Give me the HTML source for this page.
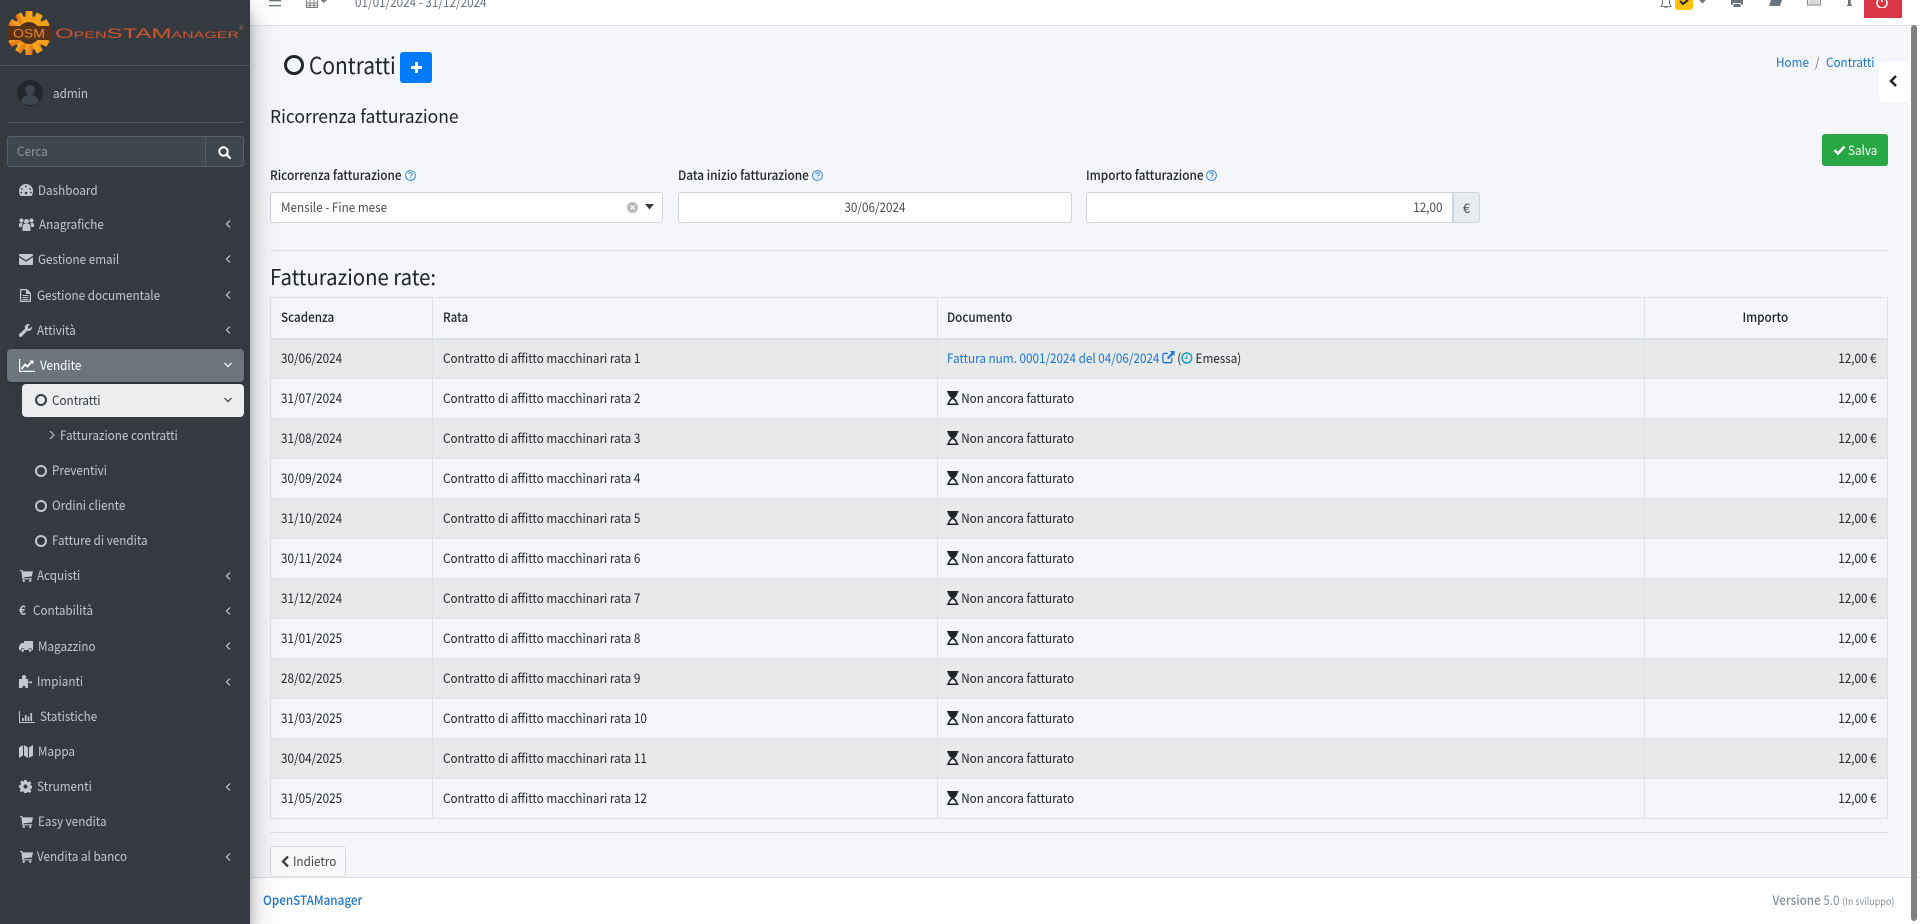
<!DOCTYPE html>
<html lang="it"><head><meta charset="utf-8"><title>Contratti</title>
<style>
*{box-sizing:border-box}
html,body{margin:0;padding:0;width:1920px;height:924px;overflow:hidden;background:#fff}
body{font-family:"Noto Sans CJK JP","Liberation Sans",sans-serif;font-size:13px;color:#212529;position:relative}
.a{position:absolute;white-space:nowrap}
.l{position:absolute;white-space:nowrap;line-height:20px;height:20px;transform:scaleX(.9);transform-origin:left center}
.t{display:inline-block;transform:scaleX(.9);transform-origin:left center;white-space:nowrap;position:relative;top:-1px}
.tc{transform-origin:center center}
.tr{transform-origin:right center}
#side{position:absolute;left:0;top:0;width:250px;height:924px;background:#343a40;box-shadow:0 14px 28px rgba(0,0,0,.25),0 10px 10px rgba(0,0,0,.22);z-index:5;color:#c2c7d0}
.ic{position:absolute;fill:currentColor}
.ch{position:absolute;left:224px;width:8px;height:10px;fill:none;stroke:currentColor;stroke-width:1.200}
.ring{position:absolute;left:35px;width:12px;height:12px;border:2px solid #c2c7d0;border-radius:50%}
#hdr{position:absolute;left:250px;top:0;width:1670px;height:26px;background:#fff;border-bottom:1px solid #dee2e6}
#main{position:absolute;left:250px;top:26px;width:1658px;height:851px;background:#f4f6f9}
#foot{position:absolute;left:250px;top:877px;width:1670px;height:47px;background:#fff;border-top:1px solid #dee2e6}
.inp{position:absolute;top:192px;height:31px;background:#fff;border:1px solid #ced4da;border-radius:3px;line-height:29px;color:#495057}
.lab{font-weight:500;color:#212529}
table{position:absolute;left:270px;top:297px;width:1617px;border-collapse:collapse;table-layout:fixed}
td,th{border:1px solid #dee2e6;padding:0 10px 0 9.500px;height:40px;line-height:20px;font-weight:400;text-align:left;white-space:nowrap;overflow:hidden}
th{font-weight:500;height:41px;border-bottom:2px solid #dee2e6}
tr.o td{background:#e8e9eb}
tr.e td{background:#f4f6f9}
.r{text-align:right}
a{color:#1976d2;text-decoration:none}
svg.h{width:12.800px;height:14px;vertical-align:-2px;margin-right:3px}
</style></head><body>
<svg width="0" height="0" style="position:absolute"><defs>
<symbol id="hg" viewBox="0 0 12 14" preserveAspectRatio="none"><path d="M0 0h12v1.500h-1.100c0 2.500-1.700 4.300-3.300 5.500 1.600 1.200 3.300 3 3.300 5.500H12V14H0v-1.500h1.100C1.100 10 2.800 8.200 4.400 7 2.800 5.800 1.100 4 1.100 1.500H0z" fill="#212529"/><path d="M2.600 12.500c.3-1.900 1.800-3.500 3.400-4.400 1.600.9 3.100 2.500 3.400 4.400z" fill="#f4f6f9"/></symbol>
<symbol id="cart" viewBox="0 0 14 13"><path d="M0 0h2.500l.5 1.500h11l-1.200 5.500-9 1 .3 1h8.900v1.200H2.500L1.500 1.200H0z"/><circle cx="4" cy="11.700" r="1.300"/><circle cx="11" cy="11.700" r="1.300"/></symbol>
</defs></svg>

<div id="main"></div>
<div id="hdr"></div>
<div id="foot"></div>

<div id="side">
<svg class="a" style="left:7px;top:10px" width="240" height="47" viewBox="0 0 240 47">
<defs><linearGradient id="g" x1="0" y1="0" x2="1" y2="1"><stop offset="0" stop-color="#f39a12"/><stop offset=".5" stop-color="#f4a71d"/><stop offset="1" stop-color="#e8661c"/></linearGradient></defs>
<g fill="url(#g)"><circle cx="22" cy="23" r="17"/>
<g id="t"><rect x="18.500" y="1" width="7" height="44" rx="1"/><rect x="18.500" y="1" width="7" height="44" rx="1" transform="rotate(30 22 23)"/><rect x="18.500" y="1" width="7" height="44" rx="1" transform="rotate(60 22 23)"/><rect x="18.500" y="1" width="7" height="44" rx="1" transform="rotate(90 22 23)"/><rect x="18.500" y="1" width="7" height="44" rx="1" transform="rotate(120 22 23)"/><rect x="18.500" y="1" width="7" height="44" rx="1" transform="rotate(150 22 23)"/></g></g>
<circle cx="22" cy="23" r="11" fill="#4a3222"/>
<rect x="0" y="16" width="44" height="14" fill="#5a3218"/>
<text x="22" y="27.500" text-anchor="middle" font-family="Liberation Sans,sans-serif" font-size="11.500" fill="#e88a25" textLength="32" lengthAdjust="spacingAndGlyphs">OSM</text>
<text x="48" y="28" font-family="Liberation Sans,sans-serif" font-size="13.500" fill="#d2552a" style="font-variant:small-caps" textLength="184" lengthAdjust="spacingAndGlyphs">OpenSTAManager</text>
<text x="232" y="20" font-family="Liberation Sans,sans-serif" font-size="6" fill="#a0705a">®</text>
</svg>
<div class="a" style="left:0;top:65px;width:250px;height:1px;background:#4b545c"></div>
<svg class="a" style="left:17px;top:80px" width="26" height="26" viewBox="0 0 26 26"><circle cx="13" cy="13" r="13" fill="#23272b"/><circle cx="13" cy="10" r="5" fill="#3f464d"/><path d="M4 22c1-6 5-7 9-7s8 1 9 7c-2.500 2-5.500 3-9 3s-6.500-1-9-3z" fill="#3f464d"/></svg>
<div class="l" style="left:53px;top:83px">admin</div>
<div class="a" style="left:7px;top:122px;width:237px;height:1px;background:#4f5962"></div>
<div class="a" style="left:7px;top:136px;width:237px;height:31px;background:#3f474e;border:1px solid #56606a;border-radius:3px"></div>
<div class="a" style="left:205px;top:136px;width:1px;height:31px;background:#56606a"></div>
<div class="l" style="left:17px;top:141px;color:#8d959d">Cerca</div>
<svg class="a" style="left:218px;top:146px;color:#fff" width="13" height="13" viewBox="0 0 13 13"><circle cx="5.500" cy="5.500" r="4.200" fill="none" stroke="#fff" stroke-width="2"/><path d="M8.500 8.500l3.500 3.500" stroke="#fff" stroke-width="2.400" stroke-linecap="round"/></svg>

<svg class="ic" style="left:19px;top:184px" width="14" height="12" viewBox="0 0 14 12"><path d="M7 0a7 7 0 0 0-7 7c0 2 .6 3.500 1.500 5h11c.9-1.500 1.500-3 1.500-5a7 7 0 0 0-7-7z"/><g fill="#343a40"><circle cx="7" cy="2.500" r=".9"/><circle cx="3" cy="5" r=".9"/><circle cx="11" cy="5" r=".9"/><circle cx="2.200" cy="8.500" r=".9"/><circle cx="11.800" cy="8.500" r=".9"/><circle cx="7" cy="9" r="1.300"/></g></svg>
<div class="l" style="left:38px;top:180px">Dashboard</div>

<svg class="ic" style="left:19px;top:218px" width="15" height="13" viewBox="0 0 15 13"><circle cx="7.500" cy="3.500" r="2.500"/><circle cx="2.500" cy="2.500" r="2"/><circle cx="12.500" cy="2.500" r="2"/><path d="M3.500 13V8.500c0-1.500 1-2.500 2-2.500h4c1 0 2 1 2 2.500V13z"/><path d="M0 9V6.500C0 5.500.8 5 1.500 5h2L2.600 9zM15 9V6.500c0-1-.8-1.500-1.500-1.500h-2l.9 4z"/></svg>
<div class="l" style="left:39px;top:214px">Anagrafiche</div>
<svg class="ch" style="top:219px" viewBox="0 0 8 10"><path d="M6 1.500L2.500 5 6 8.500"/></svg>

<svg class="ic" style="left:19px;top:254px" width="14" height="11" viewBox="0 0 14 11"><path d="M1 0h12a1 1 0 0 1 1 1v.8L7 6.300 0 1.800V1a1 1 0 0 1 1-1zM0 3.300l7 4.500 7-4.500V10a1 1 0 0 1-1 1H1a1 1 0 0 1-1-1z"/></svg>
<div class="l" style="left:38px;top:249px">Gestione email</div>
<svg class="ch" style="top:254px" viewBox="0 0 8 10"><path d="M6 1.500L2.500 5 6 8.500"/></svg>

<svg class="ic" style="left:20px;top:289px" width="11" height="13" viewBox="0 0 11 13"><path d="M0 0h7l4 4v9H0zM1.200 1.200v10.600h8.600V5H6V1.200zM2.500 6h6v1h-6zm0 2h6v1h-6zm0 2h6v1h-6z" fill-rule="evenodd"/></svg>
<div class="l" style="left:37px;top:285px">Gestione documentale</div>
<svg class="ch" style="top:290px" viewBox="0 0 8 10"><path d="M6 1.500L2.500 5 6 8.500"/></svg>

<svg class="ic" style="left:19px;top:324px" width="13" height="13" viewBox="0 0 13 13"><path d="M13 3.200c0 2-1.500 3.800-3.500 3.800-.5 0-.9-.1-1.300-.2L3 12.300c-.8.900-2 .9-2.700.2-.7-.8-.6-1.900.2-2.700L6 4.700c-.1-.5-.2-.9-.2-1.300C5.800 1.500 7.500 0 9.600 0c.5 0 1 .1 1.400.3L8.800 2.600l.4 1.800 1.700.4L12.800 2.500c.1.200.2.400.2.700z"/></svg>
<div class="l" style="left:37px;top:320px">Attività</div>
<svg class="ch" style="top:325px" viewBox="0 0 8 10"><path d="M6 1.500L2.500 5 6 8.500"/></svg>

<div class="a" style="left:7px;top:349px;width:237px;height:33px;background:#6c757d;border-radius:4px;box-shadow:0 1px 3px rgba(0,0,0,.3)"></div>
<svg class="ic" style="left:19px;top:359px;color:#fff" width="16" height="13" viewBox="0 0 16 13"><path d="M0 0h1.200v11.800H16V13H0z"/><path d="M2.500 10l3.500-4.500 2.500 2L13 2.500" fill="none" stroke="#fff" stroke-width="1.800"/><path d="M10.500 1.500h4v4z"/></svg>
<div class="l" style="left:40px;top:355px;color:#fff">Vendite</div>
<svg class="a" style="left:223px;top:361px" width="10" height="8" viewBox="0 0 10 8"><path d="M1.500 2L5 5.500 8.500 2" fill="none" stroke="#fff" stroke-width="1.200"/></svg>

<div class="a" style="left:22px;top:384px;width:222px;height:33px;background:#ecedee;border-radius:4px"></div>
<div class="ring" style="top:394px;border-color:#343a40"></div>
<div class="l" style="left:52px;top:390px;color:#343a40">Contratti</div>
<svg class="a" style="left:223px;top:396px" width="10" height="8" viewBox="0 0 10 8"><path d="M1.500 2L5 5.500 8.500 2" fill="none" stroke="#343a40" stroke-width="1.200"/></svg>

<svg class="a" style="left:49px;top:430px" width="6" height="10" viewBox="0 0 6 10"><path d="M1 1l4 4-4 4" fill="none" stroke="#c2c7d0" stroke-width="1.100"/></svg>
<div class="l" style="left:60px;top:425px">Fatturazione contratti</div>
<div class="ring" style="top:465px"></div><div class="l" style="left:52px;top:460px">Preventivi</div>
<div class="ring" style="top:500px"></div><div class="l" style="left:52px;top:495px">Ordini cliente</div>
<div class="ring" style="top:535px"></div><div class="l" style="left:52px;top:530px">Fatture di vendita</div>

<svg class="ic" style="left:20px;top:570px" width="13" height="12" viewBox="0 0 14 13"><use href="#cart"/></svg>
<div class="l" style="left:37px;top:565px">Acquisti</div>
<svg class="ch" style="top:571px" viewBox="0 0 8 10"><path d="M6 1.500L2.500 5 6 8.500"/></svg>

<div class="l" style="left:19px;top:600px;font-weight:700">€</div>
<div class="l" style="left:33px;top:600px">Contabilità</div>
<svg class="ch" style="top:606px" viewBox="0 0 8 10"><path d="M6 1.500L2.500 5 6 8.500"/></svg>

<svg class="ic" style="left:19px;top:641px" width="14" height="11" viewBox="0 0 14 11"><path d="M5 0h9v9h-1a1.800 1.800 0 0 0-3.600 0H5.500a1.800 1.800 0 0 0-3.600 0H0V5l2.500-3H5z"/><circle cx="3.700" cy="9.400" r="1.400"/><circle cx="11.200" cy="9.400" r="1.400"/></svg>
<div class="l" style="left:38px;top:636px">Magazzino</div>
<svg class="ch" style="top:641px" viewBox="0 0 8 10"><path d="M6 1.500L2.500 5 6 8.500"/></svg>

<svg class="ic" style="left:19px;top:675px" width="13" height="13" viewBox="0 0 13 13"><path d="M0 4h3.500c-.5-.8-.7-1.200-.7-1.800C2.800 1 3.500 0 5 0s2.200 1 2.200 2.200c0 .6-.2 1-.7 1.800H9v2.700h2c.5-.3.700-.6 1.200-.6.500 0 .8.500.8 1.200s-.3 1.200-.8 1.200c-.5 0-.7-.3-1.200-.6H9V13H6.500c.2-1 0-2-1.500-2s-1.700 1-1.500 2H0z"/></svg>
<div class="l" style="left:37px;top:671px">Impianti</div>
<svg class="ch" style="top:677px" viewBox="0 0 8 10"><path d="M6 1.500L2.500 5 6 8.500"/></svg>

<svg class="ic" style="left:19px;top:711px" width="16" height="12" viewBox="0 0 16 12"><path d="M0 0h1v11h15v1H0zM3 7h1.700v3H3zM5.800 4h1.700v6H5.800zM8.600 5.500h1.700V10H8.600zM11.400 2h1.700v8h-1.700z"/></svg>
<div class="l" style="left:40px;top:706px">Statistiche</div>

<svg class="ic" style="left:19px;top:745px" width="14" height="13" viewBox="0 0 14 13"><path d="M0 2.500L4 0v10.500L0 13zM5 0l4 2.500V13l-4-2.500zM10 2.500L14 0v10.500L10 13z"/></svg>
<div class="l" style="left:38px;top:741px">Mappa</div>

<svg class="ic" style="left:19px;top:780px" width="13" height="13" viewBox="0 0 13 13"><path fill-rule="evenodd" d="M5.300 0h2.400l.3 1.800 1.100.5L10.700 1.200l1.700 1.700-1.100 1.600.5 1.100 1.700.3v2.400l-1.700.3-.5 1.100 1.100 1.600-1.700 1.700-1.600-1.100-1.100.5-.3 1.600H5.300L5 11.700l-1.100-.5-1.600 1.100L.6 10.600l1.100-1.600-.5-1.100L0 7.600V5.200l1.700-.3.500-1.100L1.100 2.200 2.800.5l1.600 1.100L5 1.200zM6.500 4.500a2 2 0 1 0 0 4 2 2 0 0 0 0-4z"/></svg>
<div class="l" style="left:37px;top:776px">Strumenti</div>
<svg class="ch" style="top:782px" viewBox="0 0 8 10"><path d="M6 1.500L2.500 5 6 8.500"/></svg>

<svg class="ic" style="left:20px;top:816px" width="13" height="12" viewBox="0 0 14 13"><use href="#cart"/></svg>
<div class="l" style="left:38px;top:811px">Easy vendita</div>

<svg class="ic" style="left:20px;top:851px" width="13" height="12" viewBox="0 0 14 13"><use href="#cart"/></svg>
<div class="l" style="left:37px;top:846px">Vendita al banco</div>
<svg class="ch" style="top:852px" viewBox="0 0 8 10"><path d="M6 1.500L2.500 5 6 8.500"/></svg>
</div>

<!-- header (scrolled) -->
<svg class="a" style="left:269px;top:0" width="12" height="8" viewBox="0 0 12 8"><path d="M0 0h12v1.400H0zM0 5h12v1.400H0z" fill="#6c757d"/></svg>
<svg class="a" style="left:306px;top:0" width="24" height="8" viewBox="0 0 24 8"><path d="M.5 0v7.500h11V0M.5 3h11M4 0v7.500M8 0v7.500M.5 5.300h11" fill="none" stroke="#777" stroke-width=".9"/><path d="M14.500 0h6.500l-3.250 3z" fill="#777"/></svg>
<div class="l" style="left:355px;top:-8px;color:#6c757d">01/01/2024 - 31/12/2024</div>
<svg class="a" style="left:1660px;top:0" width="12" height="8" viewBox="0 0 12 8"><path d="M2.500 0v3L1 6.500h10L9.500 3V0M5 7c0 .6.500 1 1 1s1-.4 1-1" fill="none" stroke="#777" stroke-width="1"/></svg>
<div class="a" style="left:1675px;top:0;width:18px;height:10px;background:#ffc107;border-radius:0 0 3px 3px"></div>
<svg class="a" style="left:1678px;top:0" width="12" height="6" viewBox="0 0 12 6"><path d="M2 1l3 3 5-4" fill="none" stroke="#212529" stroke-width="2"/></svg>
<svg class="a" style="left:1699px;top:0" width="7" height="4" viewBox="0 0 7 4"><path d="M0 0h7L3.500 3.500z" fill="#777"/></svg>
<svg class="a" style="left:1731px;top:0" width="12" height="7" viewBox="0 0 12 7"><path d="M0 0h12v4.500h-2V3H2v1.500H0zM2.500 4h7v3h-7z" fill="#6c757d"/></svg>
<svg class="a" style="left:1769px;top:0" width="13" height="7" viewBox="0 0 13 7"><path d="M2 0h11l-2 6H0z" fill="#6c757d"/></svg>
<svg class="a" style="left:1807px;top:0" width="14" height="6" viewBox="0 0 14 6"><rect x=".5" y="-2" width="13" height="7" fill="#eee" stroke="#8a8a8a"/><path d="M2.500 1h9M2.500 3h9" stroke="#999" stroke-dasharray="1 1"/></svg>
<svg class="a" style="left:1847px;top:0" width="5" height="6" viewBox="0 0 5 6"><path d="M1 0h2.800v4.800H5V6H0V4.800h1z" fill="#6c757d"/></svg>
<div class="a" style="left:1864px;top:0;width:38px;height:18px;background:#dc3545"></div>
<svg class="a" style="left:1876px;top:0" width="12" height="8" viewBox="0 0 12 8"><path d="M2 0a5 5 0 1 0 8 0" fill="none" stroke="#fff" stroke-width="1.600"/><path d="M6 0v2" stroke="#fff" stroke-width="1.600"/></svg>
<div class="a" style="left:1911px;top:25px;width:6px;height:896px;background:#808080;border-radius:3px"></div>

<!-- page title -->
<div class="a" style="left:284px;top:55px;width:20px;height:20px;border:3px solid #212529;border-radius:50%"></div>
<div class="a" style="left:309px;top:46px;font-size:23px;line-height:36px;transform:scaleX(.91);transform-origin:left center">Contratti</div>
<div class="a" style="left:400px;top:52px;width:32px;height:31px;background:#007bff;border-radius:3px"></div>
<svg class="a" style="left:411px;top:62px" width="11" height="11" viewBox="0 0 11 11"><path d="M4 0h3v4h4v3H7v4H4V7H0V4h4z" fill="#fff"/></svg>
<div class="l" style="left:1776px;top:52px"><a href="#">Home</a></div>
<div class="l" style="left:1815px;top:52px;color:#6c757d">/</div>
<div class="l" style="left:1826px;top:52px"><a href="#">Contratti</a></div>
<div class="a" style="left:1879px;top:62px;width:29px;height:40px;background:#fff;border-radius:4px 0 0 4px"></div>
<svg class="a" style="left:1889px;top:75px" width="9" height="12" viewBox="0 0 9 12"><path d="M7 1L2 6l5 5" fill="none" stroke="#212529" stroke-width="2.600"/></svg>

<div class="a" style="left:270px;top:102px;font-size:18px;line-height:28px;transform:scaleX(.97);transform-origin:left center">Ricorrenza fatturazione</div>
<div class="a" style="left:1822px;top:134px;width:66px;height:32px;background:#28a745;border-radius:3px"></div>
<svg class="a" style="left:1833px;top:145px" width="13" height="10" viewBox="0 0 13 10"><path d="M1.500 5l3.500 3.500L11.500 1.500" fill="none" stroke="#fff" stroke-width="2.600"/></svg>
<div class="l" style="left:1848px;top:140px;color:#fff">Salva</div>

<div class="l lab" style="left:270px;top:165px;transform:scaleX(.91)">Ricorrenza fatturazione</div>
<svg class="a" style="left:405px;top:170px" width="11" height="11" viewBox="0 0 11 11"><circle cx="5.500" cy="5.500" r="4.900" fill="none" stroke="#3c8dd0" stroke-width="1"/><path d="M3.800 4.300c0-1 .8-1.500 1.700-1.500s1.700.5 1.700 1.400c0 1.200-1.600 1.200-1.600 2.400" fill="none" stroke="#3c8dd0"/><circle cx="5.600" cy="8" r=".6" fill="#3c8dd0"/></svg>
<div class="l lab" style="left:678px;top:165px;transform:scaleX(.91)">Data inizio fatturazione</div>
<svg class="a" style="left:812px;top:170px" width="11" height="11" viewBox="0 0 11 11"><circle cx="5.500" cy="5.500" r="4.900" fill="none" stroke="#3c8dd0" stroke-width="1"/><path d="M3.800 4.300c0-1 .8-1.500 1.700-1.500s1.700.5 1.700 1.400c0 1.200-1.600 1.200-1.600 2.400" fill="none" stroke="#3c8dd0"/><circle cx="5.600" cy="8" r=".6" fill="#3c8dd0"/></svg>
<div class="l lab" style="left:1086px;top:165px;transform:scaleX(.91)">Importo fatturazione</div>
<svg class="a" style="left:1206px;top:170px" width="11" height="11" viewBox="0 0 11 11"><circle cx="5.500" cy="5.500" r="4.900" fill="none" stroke="#3c8dd0" stroke-width="1"/><path d="M3.800 4.300c0-1 .8-1.500 1.700-1.500s1.700.5 1.700 1.400c0 1.200-1.600 1.200-1.600 2.400" fill="none" stroke="#3c8dd0"/><circle cx="5.600" cy="8" r=".6" fill="#3c8dd0"/></svg>

<div class="inp" style="left:270px;width:393px;padding-left:10px"><span class="t">Mensile - Fine mese</span></div>
<svg class="a" style="left:627px;top:202px" width="11" height="11" viewBox="0 0 11 11"><circle cx="5.500" cy="5.500" r="5.500" fill="#bbb"/><path d="M3.500 3.500l4 4m0-4l-4 4" stroke="#fff" stroke-width="1.200"/></svg>
<svg class="a" style="left:645px;top:204px" width="9" height="6" viewBox="0 0 9 6"><path d="M0 0h9L4.500 5.500z" fill="#343a40"/></svg>
<div class="inp" style="left:678px;width:394px;text-align:center"><span class="t tc">30/06/2024</span></div>
<div class="inp" style="left:1086px;width:367px;text-align:right;padding-right:10px;border-radius:3px 0 0 3px"><span class="t tr">12,00</span></div>
<div class="inp" style="left:1453px;width:27px;background:#e9ecef;text-align:center;border-radius:0 3px 3px 0">€</div>

<div class="a" style="left:270px;top:250px;width:1618px;height:1px;background:#dee2e6"></div>
<div class="a" style="left:270px;top:260px;font-size:21.500px;line-height:34px;transform:scaleX(.945);transform-origin:left center">Fatturazione rate:</div>

<table>
<colgroup><col style="width:162px"><col style="width:504.500px"><col style="width:707.500px"><col style="width:243px"></colgroup>
<tr class="e"><th><span class="t">Scadenza</span></th><th><span class="t">Rata</span></th><th><span class="t">Documento</span></th><th style="text-align:center"><span class="t tc">Importo</span></th></tr>
<tr class="o"><td><span class="t">30/06/2024</span></td><td><span class="t">Contratto di affitto macchinari rata 1</span></td><td><span class="t"><a href="#">Fattura num. 0001/2024 del 04/06/2024</a> <svg width="14" height="12.500" viewBox="0 0 13 12" preserveAspectRatio="none" style="vertical-align:-1px"><path d="M10 6.500V10a1.200 1.200 0 0 1-1.200 1.200H2A1.200 1.200 0 0 1 .8 10V3.500A1.200 1.200 0 0 1 2 2.300h4" fill="none" stroke="#1976d2" stroke-width="1.300"/><path d="M8 0h5v5l-1.700-1.700L6.500 8 5 6.500l4.700-4.800z" fill="#1976d2"/></svg> (<svg width="13" height="12" viewBox="0 0 12 12" preserveAspectRatio="none" style="vertical-align:-1px"><circle cx="6" cy="6" r="5" fill="none" stroke="#17a2b8" stroke-width="1.500"/><path d="M6 3v3.300H3.500" fill="none" stroke="#17a2b8" stroke-width="1.100"/></svg> Emessa)</span></td><td class="r"><span class="t tr">12,00 €</span></td></tr>
<tr class="e"><td><span class="t">31/07/2024</span></td><td><span class="t">Contratto di affitto macchinari rata 2</span></td><td><span class="t"><svg class="h"><use href="#hg"/></svg>Non ancora fatturato</span></td><td class="r"><span class="t tr">12,00 €</span></td></tr>
<tr class="o"><td><span class="t">31/08/2024</span></td><td><span class="t">Contratto di affitto macchinari rata 3</span></td><td><span class="t"><svg class="h"><use href="#hg"/></svg>Non ancora fatturato</span></td><td class="r"><span class="t tr">12,00 €</span></td></tr>
<tr class="e"><td><span class="t">30/09/2024</span></td><td><span class="t">Contratto di affitto macchinari rata 4</span></td><td><span class="t"><svg class="h"><use href="#hg"/></svg>Non ancora fatturato</span></td><td class="r"><span class="t tr">12,00 €</span></td></tr>
<tr class="o"><td><span class="t">31/10/2024</span></td><td><span class="t">Contratto di affitto macchinari rata 5</span></td><td><span class="t"><svg class="h"><use href="#hg"/></svg>Non ancora fatturato</span></td><td class="r"><span class="t tr">12,00 €</span></td></tr>
<tr class="e"><td><span class="t">30/11/2024</span></td><td><span class="t">Contratto di affitto macchinari rata 6</span></td><td><span class="t"><svg class="h"><use href="#hg"/></svg>Non ancora fatturato</span></td><td class="r"><span class="t tr">12,00 €</span></td></tr>
<tr class="o"><td><span class="t">31/12/2024</span></td><td><span class="t">Contratto di affitto macchinari rata 7</span></td><td><span class="t"><svg class="h"><use href="#hg"/></svg>Non ancora fatturato</span></td><td class="r"><span class="t tr">12,00 €</span></td></tr>
<tr class="e"><td><span class="t">31/01/2025</span></td><td><span class="t">Contratto di affitto macchinari rata 8</span></td><td><span class="t"><svg class="h"><use href="#hg"/></svg>Non ancora fatturato</span></td><td class="r"><span class="t tr">12,00 €</span></td></tr>
<tr class="o"><td><span class="t">28/02/2025</span></td><td><span class="t">Contratto di affitto macchinari rata 9</span></td><td><span class="t"><svg class="h"><use href="#hg"/></svg>Non ancora fatturato</span></td><td class="r"><span class="t tr">12,00 €</span></td></tr>
<tr class="e"><td><span class="t">31/03/2025</span></td><td><span class="t">Contratto di affitto macchinari rata 10</span></td><td><span class="t"><svg class="h"><use href="#hg"/></svg>Non ancora fatturato</span></td><td class="r"><span class="t tr">12,00 €</span></td></tr>
<tr class="o"><td><span class="t">30/04/2025</span></td><td><span class="t">Contratto di affitto macchinari rata 11</span></td><td><span class="t"><svg class="h"><use href="#hg"/></svg>Non ancora fatturato</span></td><td class="r"><span class="t tr">12,00 €</span></td></tr>
<tr class="e"><td><span class="t">31/05/2025</span></td><td><span class="t">Contratto di affitto macchinari rata 12</span></td><td><span class="t"><svg class="h"><use href="#hg"/></svg>Non ancora fatturato</span></td><td class="r"><span class="t tr">12,00 €</span></td></tr>
</table>

<div class="a" style="left:270px;top:832px;width:1618px;height:1px;background:#dee2e6"></div>
<div class="a" style="left:270px;top:846px;width:76px;height:31px;background:#f8f9fa;border:1px solid #ddd;border-radius:3px"></div>
<svg class="a" style="left:281px;top:855px" width="9" height="13" viewBox="0 0 9 13"><path d="M7 1.500L2 6.500l5 5" fill="none" stroke="#444" stroke-width="2.400"/></svg>
<div class="l" style="left:293px;top:851px;color:#444">Indietro</div>

<div class="l" style="left:263px;top:890px;font-weight:500"><a href="#">OpenSTAManager</a></div>
<div class="l" style="right:26px;top:890px;color:#869099;transform-origin:right center"><span style="font-weight:500">Versione</span> 5.0 <small style="font-size:10px">(In sviluppo)</small></div>
</body></html>
